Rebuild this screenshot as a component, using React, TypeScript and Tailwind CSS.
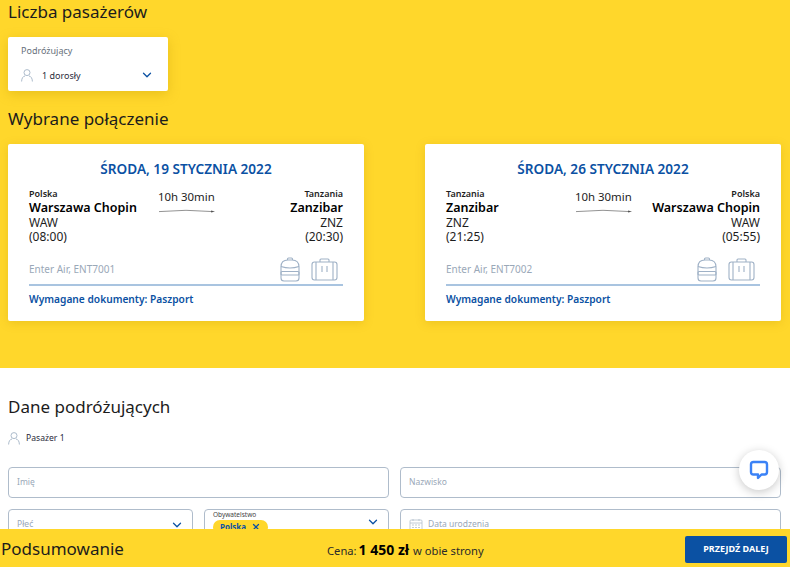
import React from "react";
import { ChevronDown, X } from "lucide-react";

const BLUE = "text-[#0b51a3]";

function Person({ className = "" }: { className?: string }) {
  return (
    <svg className={className} width="12" height="13" viewBox="0 0 12 13" fill="none" stroke="#a3b3c5" strokeWidth="0.9">
      <circle cx="6" cy="3.6" r="3" />
      <path d="M0.6 12.5 Q0.8 7.6 4 7 M11.4 12.5 Q11.2 7.6 8 7" />
    </svg>
  );
}

function Backpack() {
  return (
    <svg width="20" height="25" viewBox="0 0 20 25" fill="none" stroke="#9fb1c6" strokeWidth="1.1">
      <path d="M7.5 3 V2 Q7.5 1 8.5 1 H11.5 Q12.5 1 12.5 2 V3" />
      <path d="M1 10 Q1 3 8 3 H12 Q19 3 19 10 V21 Q19 24 16 24 H4 Q1 24 1 21 Z" />
      <path d="M1 9.5 Q10 12.5 19 9.5" />
      <rect x="1" y="14.5" width="18" height="3.5" rx="1" />
    </svg>
  );
}

function Suitcase() {
  return (
    <svg width="27" height="23" viewBox="0 0 27 23" fill="none" stroke="#9fb1c6" strokeWidth="1.1">
      <path d="M9 4 V2 Q9 1 10 1 H17 Q18 1 18 2 V4" />
      <rect x="1" y="4" width="25" height="18" rx="2.5" />
      <path d="M5 4 V22 M22 4 V22 M11 8 V14 M16 8 V14" />
    </svg>
  );
}

function FlightCard({
  date,
  from,
  to,
  flight,
}: {
  date: string;
  from: { country: string; city: string; code: string; time: string };
  to: { country: string; city: string; code: string; time: string };
  flight: string;
}) {
  return (
    <div className="h-[177px] rounded-[2px] bg-white px-[21px] pt-[16px] shadow-[0_2px_10px_rgba(180,140,0,0.25)]">
      <h3 className={`text-center text-[13.6px] font-semibold leading-[18px] ${BLUE}`}>{date}</h3>
      <div className="mt-[11px] grid h-[58px] grid-cols-[1fr_auto_1fr] text-[#1d1d1d]">
        <div>
          <p className="text-[9px] font-semibold leading-[10px]">{from.country}</p>
          <p className="mt-[1px] text-[12.5px] font-semibold leading-[16px] text-black">{from.city}</p>
          <p className="text-[12px] leading-[14px]">{from.code}</p>
          <p className="text-[12px] leading-[14px]">{from.time}</p>
        </div>
        <div className="w-[56px]">
          <p className="whitespace-nowrap text-[11.4px] leading-[16px]">10h 30min</p>
          <svg className="mt-[3px]" width="58" height="6" viewBox="0 0 58 6" fill="none">
            <path d="M1 3.6 Q28 1 55 3.6" stroke="#777" strokeWidth="0.8" />
            <path d="M53 2.5 L57 3.6 L53 4.6 Z" fill="#555" />
          </svg>
        </div>
        <div className="text-right">
          <p className="text-[9px] font-semibold leading-[10px]">{to.country}</p>
          <p className="mt-[1px] text-[12.5px] font-semibold leading-[16px] text-black">{to.city}</p>
          <p className="text-[12px] leading-[14px]">{to.code}</p>
          <p className="text-[12px] leading-[14px]">{to.time}</p>
        </div>
      </div>
      <div className="mt-[10px] flex h-[29px] items-center justify-between border-b-2 border-b-[#a9c4e0] pb-[2px]">
        <span className="text-[10px] text-[#9aa8b8]">{flight}</span>
        <div className="mr-[5px] flex items-center gap-[11px]">
          <Backpack />
          <Suitcase />
        </div>
      </div>
      <p className={`mt-[6px] text-[10.2px] font-semibold leading-[14px] ${BLUE}`}>Wymagane dokumenty: Paszport</p>
    </div>
  );
}

function Field({ children, className = "" }: { children: React.ReactNode; className?: string }) {
  return (
    <div className={`relative flex items-center rounded-[4px] border border-[#afbccb] bg-white px-2 ${className}`}>
      {children}
    </div>
  );
}

export default function App() {
  return (
    <div
      className="relative flex h-[567px] w-[790px] flex-col overflow-hidden bg-white"
      style={{ fontFamily: '"Noto Sans", sans-serif' }}
    >
      <main className="min-h-0 flex-1 overflow-hidden">
        <section className="h-[368px] bg-[#ffd72b] px-[8px]">
          <h2 className="text-[17px] leading-[23px] text-[#1c1c1c]">Liczba pasażerów</h2>
          <div className="mt-[14px] h-[54px] w-[160px] rounded-[2px] bg-white pl-[13px] pr-[14px] pt-[8px] shadow-[0_3px_12px_rgba(190,150,0,0.35)]">
            <p className="text-[9px] leading-[12px] text-[#666f7a]">Podróżujący</p>
            <div className="mt-[11px] flex items-center">
              <Person />
              <span className="ml-[9px] text-[9px] leading-[13px] text-[#2a2a3a]">1 dorosły</span>
              <ChevronDown size={14} strokeWidth={2.2} className={`ml-auto ${BLUE}`} />
            </div>
          </div>
          <h2 className="mt-[16px] text-[17px] leading-[23px] text-[#1c1c1c]">Wybrane połączenie</h2>
          <div className="mt-[14px] grid w-[773px] grid-cols-2 gap-[61px]">
            <FlightCard
              date="ŚRODA, 19 STYCZNIA 2022"
              from={{ country: "Polska", city: "Warszawa Chopin", code: "WAW", time: "(08:00)" }}
              to={{ country: "Tanzania", city: "Zanzibar", code: "ZNZ", time: "(20:30)" }}
              flight="Enter Air, ENT7001"
            />
            <FlightCard
              date="ŚRODA, 26 STYCZNIA 2022"
              from={{ country: "Tanzania", city: "Zanzibar", code: "ZNZ", time: "(21:25)" }}
              to={{ country: "Polska", city: "Warszawa Chopin", code: "WAW", time: "(05:55)" }}
              flight="Enter Air, ENT7002"
            />
          </div>
        </section>

        <section className="px-[8px] pt-[27px]">
          <h2 className="text-[17px] leading-[23px] text-[#1c1c1c]">Dane podróżujących</h2>
          <div className="mt-[14px] flex items-center gap-[6px]">
            <Person />
            <span className="text-[8.6px] text-[#2a2a3a]">Pasażer 1</span>
          </div>
          <div className="mt-[22px] grid w-[773px] grid-cols-2 gap-x-[11px] gap-y-[11px]">
            <Field className="h-[31px]">
              <span className="text-[8.5px] text-[#9aa8b8]">Imię</span>
            </Field>
            <Field className="h-[31px]">
              <span className="text-[8.5px] text-[#9aa8b8]">Nazwisko</span>
            </Field>
            <div className="grid grid-cols-2 gap-x-[11px]">
              <Field className="h-[31px]">
                <span className="text-[8.5px] text-[#9aa8b8]">Płeć</span>
                <ChevronDown size={14} strokeWidth={2.2} className={`ml-auto ${BLUE}`} />
              </Field>
              <Field className="h-[31px] items-start">
                <div>
                  <p className="text-[6.5px] leading-[10px] text-[#444]">Obywatelstwo</p>
                  <div className={`flex h-[14px] w-fit items-center gap-[5px] rounded-full bg-[#ffd72b] px-[7px] text-[8px] font-bold ${BLUE}`}>
                    Polska
                    <X size={10} strokeWidth={3} />
                  </div>
                </div>
                <ChevronDown size={14} strokeWidth={2.2} className={`ml-auto mt-[5px] ${BLUE}`} />
              </Field>
            </div>
            <Field className="h-[31px]">
              <svg width="14" height="14" viewBox="0 0 14 14" fill="none" stroke="#b3bfcc" strokeWidth="0.8">
                <rect x="1" y="2" width="12" height="11" rx="1" />
                <path d="M1 5 H13 M4 1 V3 M10 1 V3 M3 7 H5 M6 7 H8 M9 7 H11 M3 9.5 H5 M6 9.5 H8 M9 9.5 H11" />
              </svg>
              <span className="ml-[5px] text-[8.5px] text-[#9aa8b8]">Data urodzenia</span>
            </Field>
          </div>
        </section>
      </main>

      <footer className="flex h-[38px] shrink-0 items-center bg-[#ffd72b] pl-[1px] pr-[3px] pt-[2px]">
        <span className="w-[326px] shrink-0 text-[17px] text-[#1c1c1c]">Podsumowanie</span>
        <div className="flex items-baseline gap-[2px] text-[11.2px] text-[#2a2a2a]">
          <span>Cena:</span>
          <span className="text-[14px] font-bold text-black">1 450 zł</span>
          <span className="ml-[2px]">w obie strony</span>
        </div>
        <button className="ml-auto h-[27px] w-[102px] rounded-[2px] bg-[#0b51a3] text-[9px] font-bold text-white">
          PRZEJDŹ DALEJ
        </button>
      </footer>

      {/* chat launcher */}
      <div className="absolute left-[739px] top-[450px] flex h-[40px] w-[40px] items-center justify-center rounded-full bg-white shadow-[0_2px_10px_rgba(0,0,0,0.22)]">
        <svg width="20" height="20" viewBox="0 0 20 20" fill="none">
          <path
            d="M4.5 2 H15.5 Q18 2 18 4.5 V12 Q18 14.5 15.5 14.5 H12.5 L9 18 V14.5 H4.5 Q2 14.5 2 12 V4.5 Q2 2 4.5 2 Z"
            stroke="#3b82f6"
            strokeWidth="2.4"
            strokeLinejoin="round"
          />
        </svg>
      </div>
    </div>
  );
}
